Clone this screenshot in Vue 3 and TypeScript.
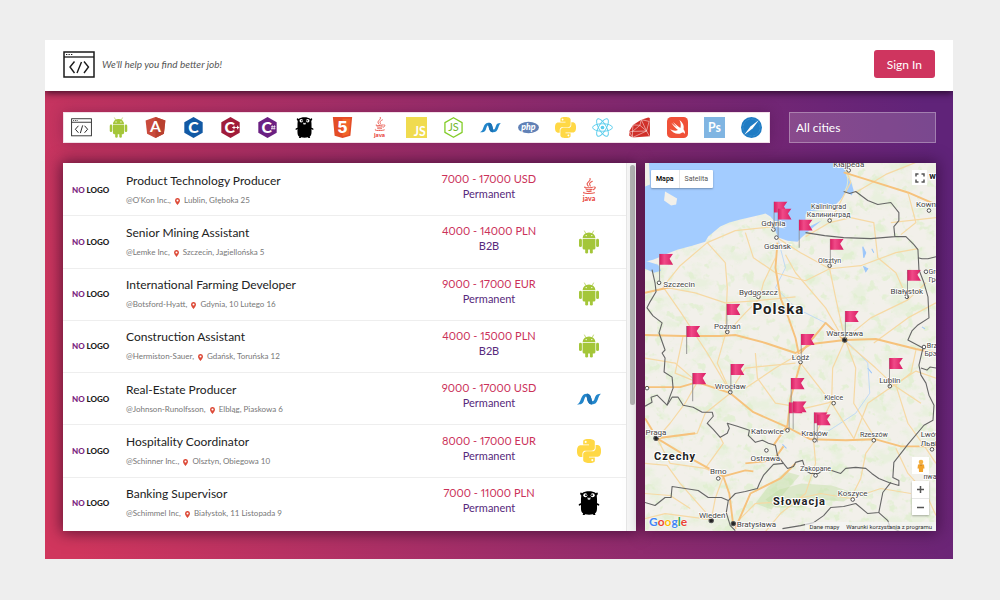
<script setup lang="ts">
import { ref } from 'vue'

interface Tech { id: string; name: string }
interface Job {
  title: string
  company: string
  place: string
  salary: string
  contract: string
  tech: string
}
interface Label { text: string; x: number; y: number; size?: number }

const hexagon = (fill: string, x: number) =>
  `<path d="M12 0l10.500 6v12L12 24 1.500 18V6z" fill="${fill}"/>
   <text x="${x}" y="18.300" text-anchor="middle" font-weight="900" font-size="18" fill="#fff">C</text>`

const icons: Record<string, string> = {
  code: `<g fill="none" stroke="#222">
    <rect x=".7" y="2" width="22.600" height="19.500"/><path d="M1 6h22M2.500 4h1M4.500 4h1M6.500 4h1"/>
    <path d="M8.500 10L5 14l3.500 4M15.500 10l3.500 4-3.500 4M13.300 9.600l-2.600 8.800" stroke-width="1.100"/></g>`,
  android: `<g fill="#a4c639">
    <path d="M5.600 8.200a6.400 5.800 0 0 1 12.800 0z"/>
    <path d="M5.600 8.900h12.800v9.200a1.500 1.500 0 0 1-1.500 1.500H7.100a1.500 1.500 0 0 1-1.500-1.500z"/>
    <rect x="2" y="8.700" width="2.900" height="8.400" rx="1.450"/><rect x="19.100" y="8.700" width="2.900" height="8.400" rx="1.450"/>
    <rect x="8.200" y="16" width="2.900" height="7.600" rx="1.450"/><rect x="12.900" y="16" width="2.900" height="7.600" rx="1.450"/></g>
    <path d="M8.800 3.500L7.500 1M15.200 3.500L16.500 1" stroke="#a4c639" stroke-width=".7" stroke-linecap="round"/>
    <circle cx="9.200" cy="5.600" r=".7" fill="#fff"/><circle cx="14.800" cy="5.600" r=".7" fill="#fff"/>`,
  angular: `<path d="M12 0l11.300 4-1.700 15L12 24l-9.600-5L.7 4z" fill="#c94a3c"/>
    <path d="M12 0l11.300 4-1.700 15L12 24z" fill="#b9402f"/>
    <text x="12" y="17.500" text-anchor="middle" font-weight="700" font-size="18" fill="#fff">A</text>`,
  c: hexagon('#1259a4', 12),
  cpp: hexagon('#a01c3a', 11) + `<path d="M14 12h4M16 10v4M18.500 12h3.500M20.200 10v4" stroke="#fff" stroke-width="1.200"/>`,
  csharp: hexagon('#6b2082', 11) + `<path d="M17.500 9.500l-.5 5M20 9.500l-.5 5M16.200 11h5M16 13h5" stroke="#fff" stroke-width=".8"/>`,
  go: `<path d="M5 2.200C4 .9 2.800 1.700 3.300 3.200c.2.700.6 1 1 1.200C3.800 8 4 11 4 14c0 3.500-.5 7 2.200 8.600L5.600 24h2l.6-.8c2.500.6 5.300.6 7.700 0l.6.800h2l-.6-1.400C20.400 21 20 17.500 20 14c0-3 .2-6-.3-9.600.4-.2.800-.5 1-1.200.5-1.500-.7-2.300-1.700-1C15.500-.4 8.500-.4 5 2.200z" fill="#000"/>
    <path d="M4 13l-1.500.8M20 13l1.500.8" stroke="#000" stroke-width="1.600" stroke-linecap="round"/>
    <circle cx="8.300" cy="4.200" r="2" fill="#fff"/><circle cx="15.700" cy="4.200" r="2" fill="#fff"/>
    <circle cx="9" cy="4.200" r=".9"/><circle cx="15" cy="4.200" r=".9"/>
    <path d="M10.300 6.500h3.400l-.6 2.200h-2.200z" fill="#ddd"/><ellipse cx="12" cy="6" rx="1" ry=".7"/>`,
  html: `<path d="M1 0h22l-2 21.500L12 24l-9-2.500z" fill="#e44d26"/><path d="M12 2h9l-1.700 18L12 22z" fill="#f16529"/>
    <text x="12" y="18.500" text-anchor="middle" font-family="Inter, sans-serif" font-weight="800" font-size="18" fill="#fff">5</text>`,
  java: `<g fill="none" stroke="#e85a50" stroke-width="1.100" stroke-linecap="round">
    <path d="M13 .5c1.500 3-5.500 3.800-1.700 7.700M15.300 3.300c-3.500 1.700-3 2.400-2 4.700"/>
    <path d="M8 9c-2 1 4.500 1 7.500.2M9 11c.5.9 4.300.9 6 .2M9.800 13c1 .6 3.300.6 4.500.1M7 14.300c-2.500 1.300 7.500 1.700 10.500.5M16.800 9c2.400-.4 1.600 2.100-.6 2.700"/></g>
    <text x="12" y="22.800" text-anchor="middle" font-weight="900" font-size="7" fill="#e8453c">java</text>`,
  js: `<path d="M0 0h24v24H0z" fill="#f0db4f"/>
    <text x="22.500" y="21.500" text-anchor="end" font-weight="700" font-size="14" fill="#fff">JS</text>`,
  node: `<path d="M12 .8l9.800 5.600v11.200L12 23.200l-9.800-5.600V6.400z" fill="none" stroke="#83cd29" stroke-width="1.500" stroke-linejoin="round"/>
    <text x="12" y="16.500" text-anchor="middle" font-size="12.500" fill="#72b82a">JS</text>`,
  net: `<path d="M0 17.500c2.600-1.200 3.100-3.200 4-5.700C5.200 8.600 6.600 6.700 10 6.700c2.900 0 3.800 2.400 4.400 4.900.4 1.700.7 2.700 1.400 2.700 1.200 0 1.700-2.600 2.600-4.700.9-2 2.200-2.800 5.600-2.800-1.600 1-2.300 3.200-3.100 5.500-1.200 3.400-2.600 5.200-6.100 5.200-3 0-4-2.500-4.600-4.900-.4-1.700-.6-3-1.200-3-1 0-1.500 2.400-2.300 4.600-.9 2.400-2.200 3.300-6.700 3.300z" fill="#2386cb"/>
    <path d="M10 6.700c2.900 0 3.800 2.400 4.400 4.900.6 2.400 1.200 4.900.4 5.900-3 0-4-2.500-4.600-4.900L9.400 8z" fill="#1c72b5"/>`,
  php: `<ellipse cx="12" cy="12" rx="12" ry="6.500" fill="#6181b6"/>
    <text x="12" y="15" text-anchor="middle" font-weight="900" font-style="italic" font-size="10" fill="#fff">php</text>`,
  python: `<path fill="#ffd845" d="M14.250.18l.9.2.73.26.59.3.45.32.34.34.25.34.16.33.1.3.04.26.02.2-.01.13V8.500l-.05.63-.13.55-.21.46-.26.38-.3.31-.33.25-.35.19-.35.14-.33.1-.3.07-.26.04-.21.02H8.770l-.69.05-.59.14-.5.22-.41.27-.33.32-.27.35-.2.36-.15.37-.1.35-.07.32-.04.27-.02.21v3.060H3.170l-.21-.03-.28-.07-.32-.12-.35-.18-.36-.26-.36-.36-.35-.46-.32-.59-.28-.73-.21-.88-.14-1.050-.05-1.230.06-1.220.16-1.040.24-.87.32-.71.36-.57.4-.44.42-.33.42-.24.4-.16.36-.1.32-.05.24-.01h.16l.06.01h8.160v-.83H6.180l-.01-2.750-.02-.37.05-.34.11-.31.17-.28.25-.26.31-.23.38-.2.44-.18.51-.15.58-.12.64-.1.71-.06.77-.04.84-.02 1.270.05zm-6.300 1.980l-.23.33-.08.41.08.41.23.34.33.22.41.09.41-.09.33-.22.23-.34.08-.41-.08-.41-.23-.33-.33-.22-.41-.09-.41.09zm13.090 3.950l.28.06.32.12.35.18.36.27.36.35.35.47.32.59.28.73.21.88.14 1.040.05 1.230-.06 1.230-.16 1.040-.24.86-.32.71-.36.57-.4.45-.42.33-.42.24-.4.16-.36.09-.32.05-.24.02-.16-.01h-8.220v.82h5.840l.01 2.760.02.36-.05.34-.11.31-.17.29-.25.25-.31.24-.38.2-.44.17-.51.15-.58.13-.64.09-.71.07-.77.04-.84.01-1.270-.04-1.070-.14-.9-.2-.73-.25-.59-.3-.45-.33-.34-.34-.25-.34-.16-.33-.1-.3-.04-.25-.02-.2.01-.13v-5.340l.05-.64.13-.54.21-.46.26-.38.3-.32.33-.24.35-.2.35-.14.33-.1.3-.06.26-.04.21-.02.13-.01h5.840l.69-.05.59-.14.5-.21.41-.28.33-.32.27-.35.2-.36.15-.36.1-.35.07-.32.04-.28.02-.21V6.070h2.090l.14.01zm-6.470 14.250l-.23.33-.08.41.08.41.23.33.33.23.41.08.41-.08.33-.23.23-.33.08-.41-.08-.41-.23-.33-.33-.23-.41-.08-.41.08z"/>`,
  react: `<g fill="none" stroke="#5bcdec" stroke-width="1.100"><ellipse cx="12" cy="12" rx="11.300" ry="4.300"/>
    <ellipse cx="12" cy="12" rx="11.300" ry="4.300" transform="rotate(60 12 12)"/>
    <ellipse cx="12" cy="12" rx="11.300" ry="4.300" transform="rotate(120 12 12)"/></g><circle cx="12" cy="12" r="2.100" fill="#5bcdec"/>`,
  ruby: `<path d="M22 .5l1.800.5L24 22 4 23.500.3 21.500.5 16l4-7L14 3z" fill="#d0302a"/>
    <path d="M14 3l-1.500 6.500L4.500 9 4 16.500l-3.500.5L4 23.500l0-7 8.500-7L20 16l-6-13 9 2L20 16l3.500 6M4 23.500L20 16M4 16.500L20 16" fill="none" stroke="#fff" stroke-width=".7" opacity=".8"/>`,
  swift: `<rect width="24" height="24" rx="5" fill="#f05138"/>
    <path d="M14.200 3.500c4 2.700 5.700 7 4.700 10.500 1.800 2.300 1.900 4.300 1.400 5.300-1.200-1.900-2.700-1.700-3.800-1.100-4.300 2.300-9.900.5-13-4.400 3.300 2.200 6.700 2.500 9 1.100C9.200 12.300 6.600 9 5 6.500c2.200 2 4.700 4 6.300 5C9.600 9.700 8 7.500 7 5.700c2.700 2.700 5.600 5.200 8.300 6.900.9-2.700.5-6-1.100-9.100z" fill="#fff"/>`,
  ps: `<path d="M0 0h24v24H0z" fill="#80b5e2"/>
    <text x="12" y="17" text-anchor="middle" font-weight="700" font-size="14" fill="#fff">Ps</text>`,
  safari: `<circle cx="12" cy="12" r="12" fill="#1f7cc4"/>
    <circle cx="12" cy="12" r="9.700" fill="none" stroke="#68aee0" stroke-width=".8" stroke-dasharray=".6 1"/>
    <path d="M20.500 3.500l-7.300 9.700-9.700 7.300 7.300-9.700z" fill="#fff"/>`,
}

const techs: Tech[] = [
  { id: 'code', name: 'All' }, { id: 'android', name: 'Android' }, { id: 'angular', name: 'Angular' },
  { id: 'c', name: 'C' }, { id: 'cpp', name: 'C++' }, { id: 'csharp', name: 'C#' },
  { id: 'go', name: 'Go' }, { id: 'html', name: 'HTML5' }, { id: 'java', name: 'Java' },
  { id: 'js', name: 'JavaScript' }, { id: 'node', name: 'Node.js' }, { id: 'net', name: '.NET' },
  { id: 'php', name: 'PHP' }, { id: 'python', name: 'Python' }, { id: 'react', name: 'React' },
  { id: 'ruby', name: 'Ruby' }, { id: 'swift', name: 'Swift' }, { id: 'ps', name: 'Photoshop' },
  { id: 'safari', name: 'Safari' },
]

const jobs: Job[] = [
  { title: 'Product Technology Producer', company: "@O'Kon Inc.,", place: 'Lublin, Głęboka 25', salary: '7000 - 17000 USD', contract: 'Permanent', tech: 'java' },
  { title: 'Senior Mining Assistant', company: '@Lemke Inc,', place: 'Szczecin, Jagiellońska 5', salary: '4000 - 14000 PLN', contract: 'B2B', tech: 'android' },
  { title: 'International Farming Developer', company: '@Botsford-Hyatt,', place: 'Gdynia, 10 Lutego 16', salary: '9000 - 17000 EUR', contract: 'Permanent', tech: 'android' },
  { title: 'Construction Assistant', company: '@Hermiston-Sauer,', place: 'Gdańsk, Toruńska 12', salary: '4000 - 15000 PLN', contract: 'B2B', tech: 'android' },
  { title: 'Real-Estate Producer', company: '@Johnson-Runolfsson,', place: 'Elbląg, Piaskowa 6', salary: '9000 - 17000 USD', contract: 'Permanent', tech: 'net' },
  { title: 'Hospitality Coordinator', company: '@Schinner Inc.,', place: 'Olsztyn, Obiegowa 10', salary: '8000 - 17000 EUR', contract: 'Permanent', tech: 'python' },
  { title: 'Banking Supervisor', company: '@Schimmel Inc,', place: 'Białystok, 11 Listopada 9', salary: '7000 - 11000 PLN', contract: 'Permanent', tech: 'go' },
]

const city = ref('All cities')

const borders: string[] = [
  'M7 107L10 120L11 129L5 139L2 145L8 153L17 160L14 170L20 187L17 190L20 195L19 209L27 214L28 225L25 233L22 242',
  'M0 243L7 239L6 234L12 232L17 237L22 242L27 234L33 234L38 242L48 244L57 249L67 249L68 253L62 260L68 266L75 274L82 270L84 265L82 260L92 263L104 267L103 272L110 279L117 277L123 280L130 282L132 292L138 300L142 305L148 303L150 299L157 297L160 307L165 310L173 310L178 306L186 307L195 310L200 305L210 304L220 305L226 310L233 315L243 319L253 322L253 317L247 314L248 299L262 281L278 262L287 257L288 242L283 232L280 220L275 212L273 202L277 185L262 177L266 168L272 162L283 155L282 134L278 120L273 107L272 87L268 82L260 74L249 74',
  'M160 70L179 73L198 75L225 76L249 74L248 64L253 58L253 50L245 40L232 42L222 38L210 29L204 31L198 29',
  'M272 95L276 96L282 96L290 94',
  'M275 205L281 207L284 204L290 205',
  'M138 300L128 301L118 312L114 320L112 325L100 328L90 330L83 337L81 349L85 362L90 367',
  'M0 339L10 342L20 334L26 334L27 323L40 325L53 327L63 334L76 334L83 337',
  'M137 365L155 362L168 359L178 352L185 344L198 343L210 340L222 350L233 349L237 329L245 319',
  'M233 349L242 357L244 363L254 368',
]

const majorRoads: string[] = [
  'M0 172L38 173L75 173L90 172L120 180L150 190L166 181L199 177L230 176L270 186L290 190',
  'M132 80L130 105L135 135L143 155L150 175L155 200L145 235L142 262L128 282',
  'M0 224L35 224L52 219L85 230L108 249L140 263L165 276L200 277L230 276L255 283L290 283',
  'M0 255L12 275L40 292L78 313L84 330L88 362',
  'M12 275L50 270',
  'M78 313L100 307L108 308',
  'M155 190L180 160L199 178',
  'M0 130L18 126L35 122',
  'M138 283L128 297L100 300',
  'M198 10L230 20L262 30L290 42',
  'M90 365L105 330L135 315L150 300',
]

const minorRoads: string[] = [
  'M18 124L35 103L62 80L90 68L128 64', 'M18 124L36 150L62 190L85 229', 'M18 124L50 130L80 140L110 138L150 134',
  'M62 80L80 100L82 125L80 172', 'M80 172L100 150L114 136L118 120L130 95', 'M80 172L72 200L85 228L100 205L150 200',
  'M0 195L30 200L52 219L40 240L25 260L12 275', 'M133 76L155 90L184 106L215 103L250 90L272 86',
  'M184 106L190 135L199 176', 'M199 176L225 155L262 137L280 120', 'M262 137L250 110L232 95L228 60L205 55L184 60L160 74',
  'M184 60L205 20L198 0', 'M245 60L290 55', 'M199 178L187 205L186 238L168 275', 'M199 178L230 205L248 222L275 240',
  'M155 200L186 240L208 275', 'M155 190L130 205L100 225', 'M248 222L222 240L208 276', 'M248 222L270 208L290 215',
  'M200 178L210 205L208 240L230 276', 'M85 230L60 250L52 270L12 275', 'M12 275L25 300L60 305L78 313',
  'M0 300L22 302L35 320L66 355', 'M78 313L70 335L66 356L20 350L0 355', 'M88 362L110 340L140 338L175 330L205 335L235 325L265 330',
  'M168 276L170 300L160 330L135 350L120 368', 'M205 335L215 315L220 290L230 276', 'M250 285L262 310L280 330L290 352',
  'M0 330L25 332L45 345', 'M228 180L262 155L290 140', 'M210 30L240 12L270 0', 'M262 30L270 60L255 72', 'M200 180L180 145L150 110L140 92',
  'M110 190L112 215L130 240L160 245L190 238', 'M38 173L30 210L52 219', 'M100 70L108 95L130 110L160 118L184 106',
  'M270 187L265 210L250 222', 'M60 305L78 280L75 274', 'M250 222L262 260L280 285L290 300',
]

const labels: Label[] = [
  { text: 'Kłajpeda', x: 203, y: 5 }, { text: 'Kown', x: 280, y: 44 },
  { text: 'Kaliningrad', x: 183, y: 46, size: 7 }, { text: 'Калининград', x: 183, y: 54, size: 7 },
  { text: 'Gdynia', x: 128, y: 63 }, { text: 'Gdańsk', x: 132, y: 86 }, { text: 'Szczecin', x: 34, y: 124 },
  { text: 'Olsztyn', x: 184, y: 100, size: 7 }, { text: 'Bydgoszcz', x: 113, y: 132 },
  { text: 'Białystok', x: 261, y: 131 }, { text: 'Poznań', x: 82, y: 166 }, { text: 'Warszawa', x: 199, y: 173 },
  { text: 'Łódź', x: 155, y: 197 }, { text: 'Wrocław', x: 85, y: 226 }, { text: 'Lublin', x: 244, y: 220 },
  { text: 'Kielce', x: 188, y: 237, size: 7 }, { text: 'Katowice', x: 122, y: 271 }, { text: 'Kraków', x: 169, y: 273 },
  { text: 'Rzeszów', x: 228, y: 274, size: 7 }, { text: 'Praga', x: 11, y: 272 }, { text: 'Ostrawa', x: 120, y: 298 },
  { text: 'Brno', x: 73, y: 311 }, { text: 'Zakopane', x: 170, y: 308, size: 7 }, { text: 'Koszyce', x: 207, y: 332 },
  { text: 'Wiedeń', x: 67, y: 354 }, { text: 'Bratysława', x: 111, y: 363 }, { text: 'Lwów', x: 285, y: 274 },
  { text: 'Львів', x: 285, y: 283 }, { text: 'Brz', x: 286, y: 185, size: 7 }, { text: 'Брэст', x: 288, y: 193, size: 7 },
  { text: 'Gro', x: 288, y: 111, size: 7 }, { text: 'Гро', x: 288, y: 119, size: 7 }, { text: 'nwa', x: 284, y: 316, size: 7 },
]

const dots: number[][] = [
  [203, 8], [283, 48], [184, 58], [128, 67], [131, 75], [14, 120], [184, 103], [113, 134], [261, 134], [82, 169],
  [155, 199], [85, 229], [244, 223], [188, 240], [142, 267], [169, 277], [228, 277], [121, 287], [73, 315],
  [207, 336], [286, 286], [2, 225], [280, 109], [278, 184], [170, 312],
]
const capitals: number[][] = [[199, 177], [11, 275], [66, 357], [88, 360]]

const flags: number[][] = [
  [128, 39], [132, 46], [153, 57], [184, 76], [261, 107], [199, 148], [155, 171], [14, 91], [81, 141],
  [41, 163], [47, 210], [85, 201], [145, 215], [143, 239], [147, 238], [243, 195], [168, 249], [171, 251],
]
</script>

<template>
  <div class="page">
    <div class="shell">
      <header class="top">
        <a class="brand" href="#" aria-label="Home">
          <svg width="32" height="27" viewBox="0 0 32 27" fill="none" stroke="#1a1a1a">
            <rect x="1" y="1" width="30" height="25" stroke-width="1.500" />
            <path d="M1 6h30" stroke-width="1.300" />
            <path d="M3 3.500h1.300M5.500 3.500h1.300M8 3.500h1.300" />
            <path d="M11.500 10.500L7 16l4.500 6M21 10.500l4.500 5.500-4.500 6M18.500 11l-4.500 11" stroke-width="1.400" />
          </svg>
        </a>
        <p class="tagline">We'll help you find better job!</p>
        <button class="signin" type="button">Sign In</button>
      </header>

      <main class="body">
        <nav class="techs" aria-label="Technologies">
          <button v-for="t in techs" :key="t.id" type="button" class="tech" :aria-label="t.name">
            <svg class="icon" width="21" height="21" viewBox="0 0 24 24" v-html="icons[t.id]"></svg>
          </button>
        </nav>
        <select v-model="city" class="cities" aria-label="City">
          <option>All cities</option>
        </select>

        <section class="jobs">
          <ul class="list">
            <li v-for="job in jobs" :key="job.title" class="job">
              <div class="logo"><span>NO</span> LOGO</div>
              <div class="info">
                <a class="title" href="#">{{ job.title }}</a>
                <p class="meta">
                  {{ job.company }}
                  <svg class="pin" width="5" height="7" viewBox="0 0 5 7"><path fill-rule="evenodd" d="M2.500 0A2.400 2.400 0 0 1 5 2.400C5 4 2.500 7 2.500 7S0 4 0 2.400A2.400 2.400 0 0 1 2.500 0zm0 1.400a1 1 0 1 0 0 2 1 1 0 0 0 0-2z" fill="#dd4b39" /></svg>
                  {{ job.place }}
                </p>
              </div>
              <div class="terms">
                <span class="salary">{{ job.salary }}</span>
                <span class="contract">{{ job.contract }}</span>
              </div>
              <svg class="icon stack" width="24" height="24" viewBox="0 0 24 24" v-html="icons[job.tech]"></svg>
            </li>
          </ul>
          <div class="track"><div class="thumb"></div></div>
        </section>

        <section class="map" aria-label="Map">
          <svg class="canvas" viewBox="0 0 290 368" preserveAspectRatio="xMidYMid slice">
            <defs>
              <filter id="woods" x="0" y="0" width="100%" height="100%">
                <feTurbulence type="fractalNoise" baseFrequency=".045 .06" numOctaves="4" seed="7" />
                <feColorMatrix values="0 0 0 0 .79  0 0 0 0 .87  0 0 0 0 .7  5 0 0 0 -2.500" />
              </filter>
              <filter id="meadow" x="0" y="0" width="100%" height="100%">
                <feTurbulence type="fractalNoise" baseFrequency=".1" numOctaves="3" seed="21" />
                <feColorMatrix values="0 0 0 0 .74  0 0 0 0 .86  0 0 0 0 .62  0 9 0 0 -5.400" />
              </filter>
              <linearGradient id="flag-fill" x1="0" x2="1">
                <stop offset="0" stop-color="#d81e62" /><stop offset=".35" stop-color="#f04a88" /><stop offset="1" stop-color="#d91e64" />
              </linearGradient>
              <symbol id="flag" viewBox="0 0 16 30">
                <path d="M.5 0v28" stroke="#888" stroke-width="1" />
                <path d="M.5 0H14l-3.500 5L14 11H.5z" fill="url(#flag-fill)" />
              </symbol>
            </defs>
            <rect width="290" height="368" fill="#f2f0ea" />
            <rect width="290" height="368" filter="url(#woods)" opacity=".75" />
            <rect width="290" height="368" filter="url(#meadow)" opacity=".7" />
            <path d="M120 336l14-10 22-6 30 2 24 8-12 8-26-2-16 8-26 0z" fill="#bcdc9c" opacity=".4" />
            <path d="M110 340l12-16 18-16 14 4-14 16-14 18z" fill="#bcdc9c" opacity=".4" />
            <path d="M4 0L5 22L0 24V99L8 97L13 95L22 91L32 87L47 83L60 79L63 74L75 64L84 60L95 57L108 54L120 51L125 54L130 60L140 66L133 65L129 62L130 69L133 75L142 78L152 79L156 75L165 67L176 58L160 66L160 52L163 49L178 47L188 44L195 37L201 29L206 33L208 28L205 18L201 14L200 0Z" fill="#a3ccff" />
            <path d="M0 98L13 102L16 108L9 110L0 106Z" fill="#a3ccff" />
            <path d="M199 29Q204 20 201 12L198 0" stroke="#dfe9cf" stroke-width="1" fill="none" />
            <path d="M20 29l12 7-1 6-5 1-7-5z" fill="#f2f0ea" />
            <path d="M217 84l3 6-2 5zM218 104l4 2-2 3zM226 86l2 4zM276 164l3 2zM137 281l4 4zM222 205l4 5z" fill="#9cc6fa" stroke="#9cc6fa" />
            <path d="M133 78L140 105L130 125L150 145L180 160L200 177L222 200L224 230L210 250L170 276" fill="none" stroke="#b5d4f7" stroke-width=".8" />
            <g fill="none" stroke="#f6d9a4" stroke-width="1.200" stroke-linejoin="round"><path v-for="d in minorRoads" :key="d" :d="d" /></g>
            <g fill="none" stroke="#f6c27c" stroke-width="1.900" stroke-linejoin="round"><path v-for="d in majorRoads" :key="d" :d="d" /></g>
            <g fill="none" stroke="#666" stroke-width="1.100" stroke-linejoin="round"><path v-for="d in borders" :key="d" :d="d" /></g>
            <circle v-for="d in dots" :key="d.join()" :cx="d[0]" :cy="d[1]" r="1.800" fill="#fff" stroke="#444" stroke-width=".9" />
            <circle v-for="d in capitals" :key="d.join()" :cx="d[0]" :cy="d[1]" r="2.200" fill="#222" stroke="#555" />
            <g class="names">
              <text v-for="l in labels" :key="l.text" :x="l.x" :y="l.y" :font-size="l.size || 8">{{ l.text }}</text>
            </g>
            <g class="countries">
              <text x="133" y="151" font-size="15">Polska</text>
              <text x="30" y="297" font-size="11">Czechy</text>
              <text x="154" y="341" font-size="11">Słowacja</text>
              <text x="287" y="17" font-size="9">w</text>
            </g>
            <use v-for="f in flags" :key="f.join()" href="#flag" :x="f[0]" :y="f[1]" width="16" height="30" />
          </svg>
          <div class="kinds">
            <button type="button" class="kind on">Mapa</button>
            <button type="button" class="kind">Satelita</button>
          </div>
          <button type="button" class="full" aria-label="Full screen">
            <svg width="10" height="10" viewBox="0 0 10 10" fill="none" stroke="#555" stroke-width="1.500"><path d="M1 3.500V1h2.500M6.500 1H9v2.500M9 6.500V9H6.500M3.500 9H1V6.500" /></svg>
          </button>
          <div class="tools">
            <button type="button" class="tool" aria-label="Street view">
              <svg width="10" height="14" viewBox="0 0 10 14"><circle cx="5" cy="3" r="2.300" fill="#f4b142" /><path d="M2 5.500h6l.5 4H7.200L7 13H3l-.2-3.500H1.500z" fill="#f2a32b" /><path d="M3 5.500h4L5 7z" fill="#c97f1c" /></svg>
            </button>
            <div class="zoom">
              <button type="button" class="tool" aria-label="Zoom in"><svg width="7" height="7" viewBox="0 0 7 7" stroke="#555" stroke-width="1.500"><path d="M0 3.500h7M3.500 0v7" /></svg></button>
              <button type="button" class="tool minus" aria-label="Zoom out"><svg width="7" height="7" viewBox="0 0 7 7" stroke="#555" stroke-width="1.500"><path d="M0 3.500h7" /></svg></button>
            </div>
          </div>
          <div class="google"><b class="b">G</b><b class="r">o</b><b class="y">o</b><b class="b">g</b><b class="g">l</b><b class="r">e</b></div>
          <div class="legal"><span>Dane mapy</span><a href="#">Warunki korzystania z programu</a></div>
        </section>
      </main>
    </div>
  </div>
</template>

<style>
body {
  margin: 0;
  background: #eee;
}
</style>

<style scoped>
* {
  box-sizing: border-box;
}
.page {
  display: flex;
  min-height: 100vh;
  padding: 40px 47px 41px 45px;
  font-family: Lato, "Open Sans", sans-serif;
}
.page button,
.page select {
  margin: 0;
  border: 0;
  font-family: inherit;
  cursor: pointer;
}
.shell {
  display: flex;
  flex: 1;
  flex-direction: column;
  min-width: 0;
}
.top {
  position: relative;
  display: flex;
  align-items: center;
  gap: 7px;
  padding: 10px 18px 13px;
  background: #fff;
  box-shadow: 0 2px 7px rgba(20, 0, 20, 0.75);
  clip-path: inset(0 0 -14px 0);
}
.brand {
  display: flex;
}
.tagline {
  flex: 1;
  margin: 0;
  color: #555;
  font-size: 10px;
  font-style: italic;
}
.page .signin {
  height: 28px;
  padding: 0 13px;
  border-radius: 3px;
  background: #cf355f;
  color: #fff;
  font-size: 12px;
}
.body {
  display: grid;
  flex: 1;
  grid-template-columns: minmax(0, 573fr) 9px minmax(0, 125fr) 19px minmax(0, 147fr);
  grid-template-rows: 31px minmax(368px, 1fr);
  row-gap: 20px;
  padding: 21px 17px 28px 18px;
  background: linear-gradient(75deg, #d0365d 3%, #602379 97%);
}
.techs {
  display: flex;
  grid-column: 1 / 4;
  align-items: center;
  justify-content: space-between;
  padding: 0 7px;
  border: 1px solid #f3dfe8;
  background: #fff;
  box-shadow: 0 0 14px rgba(40, 0, 40, 0.25);
}
.page .tech {
  display: flex;
  padding: 0;
  background: none;
}
.icon {
  font-family: Lato, sans-serif;
}
.page .cities {
  grid-column: 5;
  padding: 0 6px;
  border: 1px solid rgba(255, 255, 255, 0.3);
  border-radius: 0;
  background: rgba(255, 255, 255, 0.17);
  color: #fff;
  font-size: 12px;
  appearance: none;
}
.jobs {
  display: flex;
  min-width: 0;
  background: #fff;
  box-shadow: 0 0 14px 2px rgba(30, 0, 30, 0.6);
}
.list {
  display: flex;
  flex: 1;
  flex-direction: column;
  min-width: 0;
  margin: 0;
  padding: 1px 0;
  list-style: none;
}
.job {
  display: grid;
  flex: 1;
  grid-template-columns: 63px minmax(0, 1fr) 126px 74px;
  align-items: center;
  border-bottom: 1px solid #eee;
}
.job:last-child {
  border-bottom-color: #fff;
}
.logo {
  padding-left: 9px;
  color: #1b1b1b;
  font-size: 8px;
  font-weight: 900;
  white-space: nowrap;
}
.logo span {
  color: #7b2480;
}
.title {
  display: block;
  color: #222;
  font-size: 12px;
  line-height: 20px;
  text-decoration: none;
}
.meta {
  margin: 0;
  color: #777;
  font-size: 8px;
  line-height: 18px;
}
.pin {
  margin: 0 2px;
  vertical-align: -2px;
}
.terms {
  display: flex;
  flex-direction: column;
  padding-bottom: 7px;
  font-size: 11px;
  font-variant-numeric: proportional-nums;
  line-height: 15px;
  text-align: center;
}
.salary {
  color: #cb3159;
}
.contract {
  color: #57297c;
}
.stack {
  justify-self: center;
}
.track {
  width: 10px;
  padding: 2px 3px;
  border-left: 1px solid #e6e6e6;
  background: #f6f6f6;
}
.thumb {
  width: 5px;
  height: 66%;
  border-radius: 3px;
  background: #b4b4b4;
}
.map {
  position: relative;
  grid-column: 3 / 6;
  overflow: hidden;
  box-shadow: 0 0 14px 2px rgba(30, 0, 30, 0.5);
  font-family: Roboto, sans-serif;
}
.canvas {
  position: absolute;
  inset: 0;
  width: 100%;
  height: 100%;
}
.names text {
  fill: #444;
  stroke: #fff;
  stroke-width: 1.5px;
  paint-order: stroke;
  text-anchor: middle;
}
.countries text {
  fill: #222;
  stroke: #fff;
  stroke-width: 2px;
  paint-order: stroke;
  font-weight: 700;
  letter-spacing: 1px;
  text-anchor: middle;
}
.kinds {
  position: absolute;
  top: 7px;
  left: 6px;
  display: flex;
  border-radius: 1px;
  background: #fff;
  box-shadow: 0 1px 2px rgba(0, 0, 0, 0.3);
}
.page .kind {
  height: 18px;
  padding: 0 5px;
  background: none;
  color: #555;
  font-family: inherit;
  font-size: 7px;
}
.page .kind.on {
  border-right: 1px solid #e6e6e6;
  color: #000;
  font-weight: 500;
}
.page .full {
  position: absolute;
  top: 7px;
  right: 9px;
  display: grid;
  width: 15px;
  height: 15px;
  padding: 0;
  place-items: center;
  background: #fff;
}
.tools {
  position: absolute;
  right: 7px;
  bottom: 16px;
  display: flex;
  flex-direction: column;
  gap: 7px;
}
.zoom {
  background: #fff;
  box-shadow: 0 1px 2px rgba(0, 0, 0, 0.3);
}
.page .tool {
  display: grid;
  width: 17px;
  height: 17px;
  padding: 0;
  place-items: center;
  background: #fff;
}
.page .minus {
  border-top: 1px solid #e6e6e6;
}
.google {
  position: absolute;
  bottom: 0;
  left: 4px;
  font-size: 12px;
  font-family: Lato, sans-serif;
  line-height: 18px;
  text-shadow: 0 0 1px #fff, 0 0 2px #fff;
}
.b {
  color: #4285f4;
}
.r {
  color: #ea4335;
}
.y {
  color: #fbbc05;
}
.g {
  color: #34a853;
}
.legal {
  position: absolute;
  right: 0;
  bottom: 0;
  display: flex;
  gap: 7px;
  padding: 0 4px;
  background: rgba(245, 245, 245, 0.7);
  color: #333;
  font-size: 6px;
  line-height: 9px;
  white-space: nowrap;
}
.legal a {
  color: inherit;
  text-decoration: none;
}
</style>
